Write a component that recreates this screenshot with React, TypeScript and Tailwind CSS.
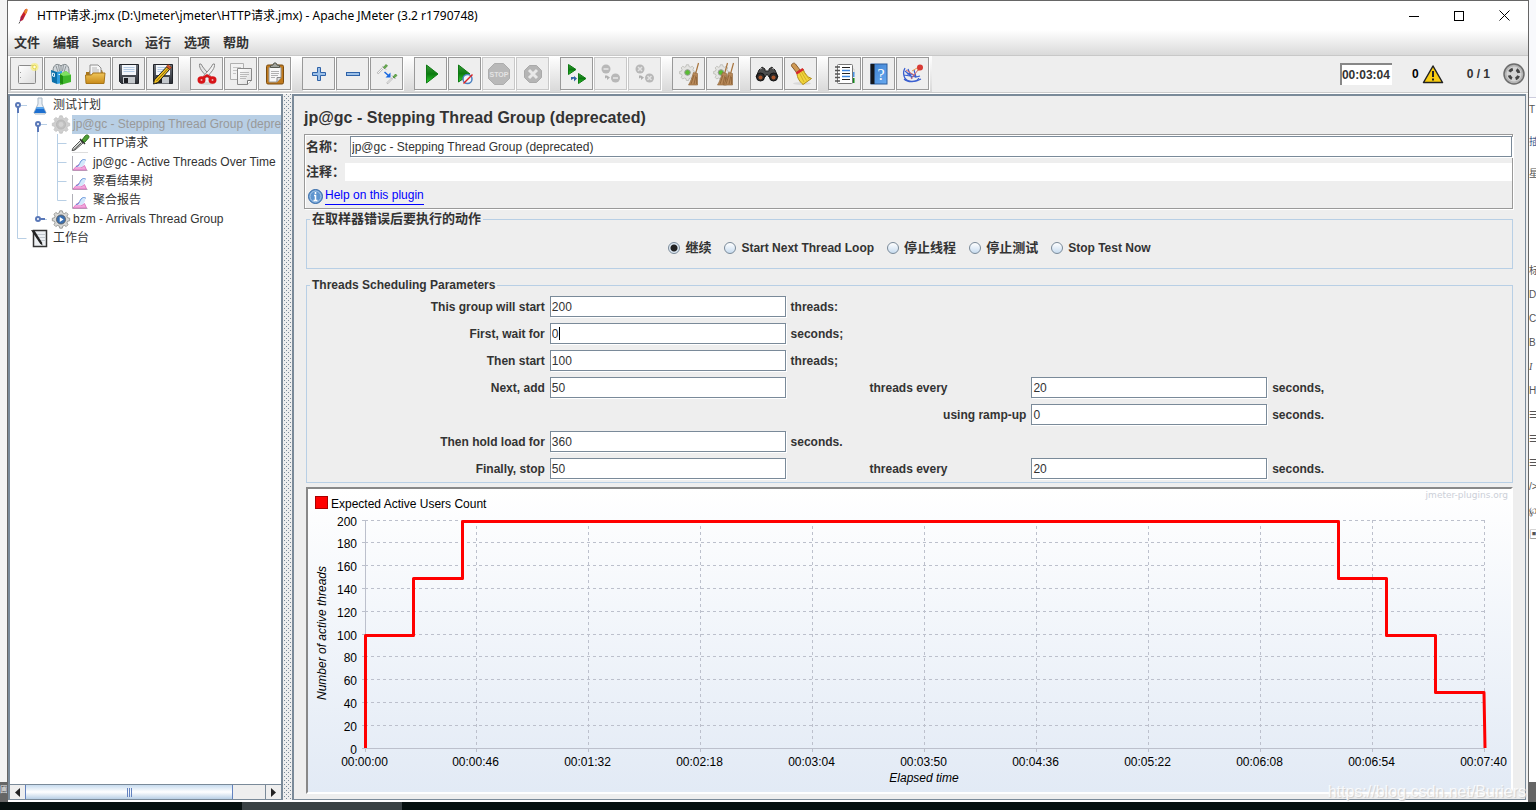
import { useState } from "react";
import type { ReactNode } from "react";

const Icon = ({ children, size = 24 }: { children: ReactNode; size?: number }) => (
    <svg width={size} height={size} viewBox="0 0 24 24" fill="none" aria-hidden="true" className="shrink-0">
        {children}
    </svg>
);

/* Shared gradients used by the icons */
const Gradients = () => (
    <svg width="0" height="0" className="absolute" aria-hidden="true">
        <defs>
            <linearGradient id="green" x1="0" y1="0" x2="0" y2="1">
                <stop offset="0" stopColor="#3a9a3a" />
                <stop offset=".5" stopColor="#0b7a10" />
                <stop offset="1" stopColor="#2fd02f" />
            </linearGradient>
            <linearGradient id="gold" x1="0" y1="0" x2="0" y2="1">
                <stop offset="0" stopColor="#f0c65a" />
                <stop offset="1" stopColor="#c88a18" />
            </linearGradient>
            <linearGradient id="paper" x1="0" y1="0" x2="1" y2="1">
                <stop offset="0" stopColor="#ffffff" />
                <stop offset="1" stopColor="#dcdcdc" />
            </linearGradient>
            <linearGradient id="blue" x1="0" y1="0" x2="1" y2="1">
                <stop offset="0" stopColor="#3b7fd0" />
                <stop offset="1" stopColor="#68aaf0" />
            </linearGradient>
            <linearGradient id="steel" x1="0" y1="0" x2="0" y2="1">
                <stop offset="0" stopColor="#6a7078" />
                <stop offset="1" stopColor="#2a2d33" />
            </linearGradient>
            <linearGradient id="area" x1="0" y1="0" x2="0" y2="1">
                <stop offset="0" stopColor="#ffffff" />
                <stop offset="1" stopColor="#e2eaf5" />
            </linearGradient>
        </defs>
    </svg>
);

const NewIcon = () => (
    <Icon>
        <rect x="3.5" y="3.5" width="17" height="18" rx="1" fill="url(#paper)" stroke="#8a8a8a" />
        <path d="M5.5 10v1M5.5 15v1" stroke="#999" />
        <circle cx="19.5" cy="5" r="4" fill="#f7ee7a" opacity=".7" />
        <circle cx="19.5" cy="5" r="1.8" fill="#fffde0" stroke="#e6d84a" />
    </Icon>
);

const TemplatesIcon = () => (
    <Icon>
        <path d="M4 9c0-7 5-8 8-5 3-3 8-2 8 5v4H4z" fill="#d3d8dc" stroke="#7d8589" />
        <path d="M7 4l2 6M12 4v6M17 4l-2 6M9.5 3l1 6M14.500 3l-1 6" stroke="#7d8589" strokeWidth=".8" />
        <path d="M2 8l6 2v12l-5-2z" fill="#0c6fa8" />
        <path d="M8 10l5-1v12l-5 1z" fill="#2f9ddd" />
        <path d="M3.500 11l2 .6v3l-2-.6zM9.500 12.500h2" stroke="#dff0fa" />
        <path d="M11 12l6-3 5 4v7l-11 3z" fill="#3fb82c" />
        <path d="M11 12l3 1v9.500l-3-1.500z" fill="#1e8d12" />
        <path d="M17 9l5 4-8 1-3-2z" fill="#7fe062" />
    </Icon>
);

const OpenIcon = () => (
    <Icon>
        <path d="M3 10h3l1-2h12l1 3v8H3z" fill="#a8761c" />
        <path d="M7 13V3h8l3 3v8z" fill="#f7f7f7" stroke="#909090" />
        <path d="M9 6h5M9 8h7M9 10h7" stroke="#b5b5b5" />
        <path d="M2.500 13h6l1.500-2h12l-1 10.500h-18z" fill="url(#gold)" stroke="#a87518" />
    </Icon>
);

const Floppy = () => (
    <>
        <path d="M2.500 2.500h19v19h-17l-2-2z" fill="url(#steel)" stroke="#22252a" />
        <rect x="5" y="3" width="14" height="10" fill="#f3f6fa" />
        <path d="M6.500 5.500h11M6.500 7.500h11M6.500 9.500h11" stroke="#b4cbe4" />
        <rect x="6" y="15" width="12" height="6.500" fill="#c4c8cc" />
        <rect x="7" y="16" width="4" height="5" fill="#1c1e22" />
    </>
);

const SaveIcon = () => (
    <Icon>
        <Floppy />
    </Icon>
);

const SaveAsIcon = () => (
    <Icon>
        <Floppy />
        <path d="M15.500 5l3 2.500L7 20.500 2.500 22l.800-4z" fill="#f0c020" stroke="#1a1a1a" />
        <path d="M16.500 7L5.500 19" stroke="#8a6a08" />
        <path d="M15.500 4.500l1.500-2 3.500 3-1.700 2z" fill="#d4582a" stroke="#7a2a10" strokeWidth=".6" />
    </Icon>
);

const CutIcon = () => (
    <Icon>
        <ellipse cx="12" cy="21.500" rx="8" ry="1.500" fill="#d5d5d5" />
        <path d="M4.500 2C4 6 7 10 13.500 16l2-2C12 10 8 6 6 2z" fill="#e5e5e5" stroke="#8a8a8a" />
        <path d="M19.500 2C20 6 17 10 10.500 16l-2-2C12 10 16 6 18 2z" fill="#f3f3f3" stroke="#8a8a8a" />
        <ellipse cx="6.500" cy="18" rx="2.500" ry="2.200" stroke="#d81418" strokeWidth="3" />
        <ellipse cx="17.500" cy="18" rx="2.500" ry="2.200" stroke="#d81418" strokeWidth="3" />
        <path d="M8 16l4-2.500 4 2.500" stroke="#d81418" strokeWidth="2.500" />
    </Icon>
);

const CopyIcon = () => (
    <Icon>
        <path d="M1.500 1.500h13v16h-13z" fill="#f2f2f2" stroke="#b0b0b0" />
        <path d="M4 5.500h8M4 8.500h4M4 11.500h3" stroke="#c5c5c5" />
        <path d="M8.500 6.500h14v12l-4 4h-10z" fill="url(#paper)" stroke="#8a8a8a" />
        <path d="M11 10.500h9M11 12.500h9M11 14.500h7M11 16.500h6" stroke="#bababa" />
        <path d="M18.500 22.500v-4h4" fill="#fff" stroke="#777" />
    </Icon>
);

const PasteIcon = () => (
    <Icon>
        <rect x="3.500" y="3" width="17" height="19" rx="1.500" fill="#c07a1e" stroke="#7c4d10" />
        <path d="M6 5.500h12v10l-4 4.500H6z" fill="#f7f7f7" stroke="#999" />
        <path d="M8 9.500h8M8 11.500h8M8 13.500h7M8 15.500h4" stroke="#b0b0b0" />
        <path d="M14 20v-4.500h4" fill="#ddd" stroke="#888" />
        <path d="M7.500 5.500v-2l2.500-.500 1-2h2l1 2 2.500.500v2z" fill="#a0a39c" stroke="#55584f" />
    </Icon>
);

const PlusIcon = () => (
    <Icon>
        <path d="M10.500 5.500h3v5h5v3h-5v5h-3v-5h-5v-3h5z" fill="#9cc0e8" stroke="#2e62a8" />
    </Icon>
);

const MinusIcon = () => (
    <Icon>
        <rect x="5.500" y="10.500" width="13" height="3" fill="#9cc0e8" stroke="#2e62a8" />
    </Icon>
);

const ToggleIcon = () => (
    <Icon>
        <path d="M2.500 11.500L8 6" stroke="#b5b5b5" strokeWidth="2" />
        <path d="M3 11L8 6" stroke="#f6f6f6" />
        <path d="M7.500 4l3.500 3.500" stroke="#888" strokeWidth=".8" />
        <path d="M8.500 5.500l2.500-3 1.500 1.500-3 2.500z" fill="#68b04c" stroke="#4b8c38" strokeWidth=".8" />
        <path d="M9.500 10l4.500 4" stroke="#1768e0" strokeWidth="1.500" />
        <path d="M15.500 10.500v5h-5z" fill="#1768e0" />
        <path d="M12 21.500l5.500-5.500" stroke="#b5b5b5" strokeWidth="2" />
        <path d="M12.500 21L17 16.500" stroke="#f6f6f6" />
        <path d="M17 13.500l3.500 3.500" stroke="#888" strokeWidth=".8" />
        <path d="M18 15l2.500-3 1.500 1.500-3 2.500z" fill="#68b04c" stroke="#4b8c38" strokeWidth=".8" />
    </Icon>
);

const StartIcon = () => (
    <Icon>
        <path d="M7.500 3v18L19 12z" fill="url(#green)" stroke="#0f7a14" />
    </Icon>
);

const StartNoPauseIcon = () => (
    <Icon>
        <path d="M5.500 3v17L17 12z" fill="url(#green)" stroke="#0f7a14" />
        <circle cx="14.500" cy="17" r="4.500" fill="#eef3fa" stroke="#4a80c0" strokeWidth="1.500" />
        <path d="M10.500 21.500l9-9" stroke="#d22" strokeWidth="1.500" />
    </Icon>
);

const StopIcon = () => (
    <Icon>
        <path d="M7.500 1.500h9l6 6v9l-6 6h-9l-6-6v-9z" fill="#b9b9b9" stroke="#adadad" />
        <text x="12" y="15" textAnchor="middle" fontSize="7" fontWeight="bold" fontFamily="Liberation Sans" fill="#e4e4e4">
            STOP
        </text>
    </Icon>
);

const ShutdownIcon = () => (
    <Icon>
        <path d="M8.500 3.500h7l5 5v7l-5 5h-7l-5-5v-7z" fill="#b5b5b5" stroke="#aaa" />
        <path d="M8 8l8 8M16 8l-8 8" stroke="#e8e8e8" strokeWidth="3" />
    </Icon>
);

const RemoteStartIcon = () => (
    <Icon>
        <path d="M3.500 2.500v10L11 7.500z" fill="url(#green)" stroke="#0f7a14" />
        <path d="M13.500 11.500v10L21 16.500z" fill="url(#green)" stroke="#0f7a14" />
        <path d="M6 15v3l3-1.500v3l3-3-3-2.500v1z" fill="#3465a4" />
    </Icon>
);

const RemoteStopIcon = ({ cross }: { cross?: boolean }) => (
    <Icon>
        <circle cx="7" cy="7" r="4.500" fill="#b8b8b8" />
        <circle cx="16.500" cy="16" r="4.500" fill="#b8b8b8" />
        {cross ? (
            <path d="M5 5l4 4M9 5L5 9M14.500 14l4 4M18.500 14l-4 4" stroke="#e2e2e2" strokeWidth="1.500" />
        ) : (
            <path d="M4.500 7h5M14 16h5" stroke="#dcdcdc" strokeWidth="2" />
        )}
        <path d="M6 13.500v3l2-1v2.500l3-2.500-3-2z" fill="#b0b0b0" />
    </Icon>
);

const gearPath =
    "M8.500 1h3l.600 2.500 2 .8L16.300 3l2.200 2.200-1.300 2.200.8 2 2.500.600v3l-2.500.600-.8 2 1.300 2.200-2.200 2.200-2.200-1.300-2 .8-.600 2.500h-3l-.600-2.500-2-.8L3.700 20l-2.200-2.200 1.300-2.200-.8-2L-.500 13v-3l2.500-.600.8-2L1.500 5.200 3.700 3l2.200 1.300 2-.8z";

const Broom = ({ x }: { x: number }) => (
    <g transform={`translate(${x} 0)`}>
        <path d="M12.500 1l-3 11" stroke="#a8743c" strokeWidth="1.200" />
        <path d="M7.500 10.500l4 1 0 11.500H2.500C5 19 6 15 7.500 10.500z" fill="#b98a5a" stroke="#8a5f34" strokeWidth=".6" />
        <path d="M8 13L5 22M10 13.500L8 22M10.500 15v7" stroke="#7c5228" strokeWidth=".6" />
    </g>
);

const ClearIcon = () => (
    <Icon>
        <g transform="translate(3 2) scale(.75)">
            <path d={gearPath} fill="#e4e4e2" stroke="#b5b5b0" />
        </g>
        <circle cx="10.500" cy="10.500" r="2.800" fill="#59bd33" stroke="#999" />
        <Broom x={9} />
    </Icon>
);

const ClearAllIcon = () => (
    <Icon>
        <g transform="translate(3 2) scale(.75)">
            <path d={gearPath} fill="#e4e4e2" stroke="#b5b5b0" />
        </g>
        <circle cx="10" cy="10.500" r="2.800" fill="#59bd33" stroke="#999" />
        <Broom x={4} />
        <Broom x={10} />
    </Icon>
);

const SearchIcon = () => (
    <Icon>
        <path d="M4 8l3-3 3 2v2h4V7l3-2 3 3 3 7h-9l-2-3-2 3H1z" fill="#4d4d4d" stroke="#222" />
        <circle cx="5.500" cy="15" r="4" fill="#2b2b2b" stroke="#111" />
        <circle cx="18.500" cy="15" r="4" fill="#2b2b2b" stroke="#111" />
        <circle cx="5.500" cy="15.500" r="2" fill="#a9542a" />
        <circle cx="18.500" cy="15.500" r="2" fill="#a9542a" />
        <path d="M5 7l2-1M17 6l2 1" stroke="#b5b5b5" />
    </Icon>
);

const SweepIcon = () => (
    <Icon>
        <ellipse cx="13" cy="21.500" rx="9" ry="1.500" fill="#d9d9d9" />
        <path d="M2.500 4c-.5-2 2.500-4 4-2l4.500 6-3.500 2.500z" fill="#cf9a54" stroke="#86592a" />
        <path d="M8 11l6-4c2 5 4 8 8.500 9.500L14 22.500C11 20 8 16 8 11z" fill="#f1d53c" stroke="#b08c18" />
        <path d="M10.500 11l4.500 9M12.500 10l5 8.500M14 9l6 8" stroke="#c9a620" strokeWidth=".8" />
        <path d="M6.500 10.500l7-4.500 1.500 2-7 4.500z" fill="#d8282c" />
    </Icon>
);

const FunctionIcon = () => (
    <Icon>
        <path d="M18 7h3v5h-3z" fill="#fff" stroke="#bbb" strokeWidth=".6" />
        <path d="M18 10h3.500v5H18z" fill="#4b96e6" />
        <path d="M18 16h3.500v5H18z" fill="#158a1c" />
        <rect x="4.500" y="2.500" width="15" height="19" rx="1" fill="#fff" stroke="#777" />
        <path d="M9 5.500h8M9 11.500h8M9 17.500h8" stroke="#222" />
        <path d="M9 8.500h8M9 14.500h8" stroke="#3b86e0" strokeWidth="1.500" />
        <path d="M2 5h5M2 8.500h5M2 12h5M2 15.500h5M2 19h5" stroke="#555" strokeWidth="1.500" />
    </Icon>
);

const HelpIcon = () => (
    <Icon>
        <rect x="4" y="2" width="16" height="20" fill="url(#blue)" stroke="#2c5c9c" />
        <rect x="3.500" y="2" width="4" height="20" fill="#14171c" />
        <text x="14" y="18" textAnchor="middle" fontSize="16" fontFamily="Liberation Serif" fill="#fff">
            ?
        </text>
    </Icon>
);

const DashboardIcon = () => (
    <Icon>
        <path d="M4 6c-3 5-1 12 4 13 4 1 8 0 10-3M4 9l7 6M3 13l12 2M7 7l4 10" stroke="#3a5fd0" strokeWidth="1.200" />
        <path d="M3 17c4 4 12 3 17 0M13 8l2 7 4-1M6 12c3-1 6 0 9 3" stroke="#3a5fd0" strokeWidth="1.200" />
        <path d="M5 8l8 5M10 17l7-9" stroke="#d46a6a" />
        <path d="M11 9l5-3 2 3" stroke="#e7a05a" />
        <circle cx="19" cy="5.500" r="3" fill="#d83a34" />
    </Icon>
);

const toolbar = [
    [
        { name: "New", icon: <NewIcon /> },
        { name: "Templates", icon: <TemplatesIcon /> },
        { name: "Open", icon: <OpenIcon /> },
        { name: "Save", icon: <SaveIcon /> },
        { name: "Save as", icon: <SaveAsIcon /> },
    ],
    [
        { name: "Cut", icon: <CutIcon /> },
        { name: "Copy", icon: <CopyIcon /> },
        { name: "Paste", icon: <PasteIcon /> },
    ],
    [
        { name: "Expand all", icon: <PlusIcon /> },
        { name: "Collapse all", icon: <MinusIcon /> },
        { name: "Toggle", icon: <ToggleIcon /> },
    ],
    [
        { name: "Start", icon: <StartIcon /> },
        { name: "Start no pauses", icon: <StartNoPauseIcon /> },
        { name: "Stop", icon: <StopIcon />, disabled: true },
        { name: "Shutdown", icon: <ShutdownIcon />, disabled: true },
    ],
    [
        { name: "Remote start all", icon: <RemoteStartIcon /> },
        { name: "Remote stop all", icon: <RemoteStopIcon />, disabled: true },
        { name: "Remote shutdown all", icon: <RemoteStopIcon cross />, disabled: true },
    ],
    [
        { name: "Clear", icon: <ClearIcon /> },
        { name: "Clear all", icon: <ClearAllIcon /> },
    ],
    [
        { name: "Find", icon: <SearchIcon /> },
        { name: "Reset search", icon: <SweepIcon /> },
    ],
    [
        { name: "Function helper", icon: <FunctionIcon /> },
        { name: "Help", icon: <HelpIcon /> },
        { name: "Dashboard", icon: <DashboardIcon /> },
    ],
];

const TitleBar = () => (
    <header className="flex h-[29px] items-center bg-white pl-2">
        <svg width="16" height="16" viewBox="0 0 16 16" aria-hidden="true" className="mr-[5px]">
            <path d="M9 1.500C11 0 12 1 11 4L7 12 4 13.500 4.500 9z" fill="#c8202c" />
            <path d="M9.500 1.500C11 0 12 1 11 4l-1.500 2.500L8 4z" fill="#e8882a" />
            <path d="M7 8l-3 5" stroke="#7a1f6a" />
            <path d="M3 15.500l1-2" stroke="#555" />
        </svg>
        <h1 className="flex-1 font-['Noto_Sans','Noto_Sans_CJK_SC',sans-serif] text-xs whitespace-nowrap text-black">
            HTTP请求.jmx (D:\Jmeter\jmeter\HTTP请求.jmx) - Apache JMeter (3.2 r1790748)
        </h1>
        <div className="flex">
            <button aria-label="Minimize" className="flex h-7 w-[45px] items-center justify-center">
                <svg width="10" height="10"><path d="M0 5.500h10" stroke="#000" /></svg>
            </button>
            <button aria-label="Maximize" className="flex h-7 w-[45px] items-center justify-center">
                <svg width="10" height="10"><rect x=".5" y=".5" width="9" height="9" fill="none" stroke="#000" /></svg>
            </button>
            <button aria-label="Close" className="flex h-7 w-[47px] items-center justify-center">
                <svg width="11" height="11"><path d="M.5.500l10 10M10.500.500l-10 10" stroke="#000" /></svg>
            </button>
        </div>
    </header>
);

const menus = ["文件", "编辑", "Search", "运行", "选项", "帮助"];

const MenuBar = () => (
    <nav className="flex h-[26px] items-center gap-[13px] border-b border-[#c8c8c8] bg-gradient-to-b from-white to-[#dadada] pl-[6px] font-bold">
        {menus.map((m) => (
            <button key={m} className={m === "Search" ? "text-xs leading-4" : "text-[13px] leading-4"}>{m}</button>
        ))}
    </nav>
);

const Toolbar = () => (
    <div className="flex h-[38px] items-start justify-between border-b border-white bg-[#eee]">
        <div className="flex h-[37px] gap-[11px] border-b border-[#ccc] bg-gradient-to-b from-white to-[#d8d8d8] pt-px pr-[3px] pl-[2px]">
            {toolbar.map((group, i) => (
                <div key={i} className="flex gap-px">
                    {group.map((b) => (
                        <button
                            key={b.name}
                            aria-label={b.name}
                            disabled={b.disabled}
                            className="flex size-[33px] items-center justify-center border border-[#999] bg-[#eee] shadow-[1px_1px_0_#fff] disabled:border-[#c8c8c8]"
                        >
                            {b.icon}
                        </button>
                    ))}
                </div>
            ))}
        </div>
        <div className="flex h-[37px] flex-1 items-center justify-end border-b border-[#ccc] pr-[3px] font-bold">
            <span className="h-[22px] border-t-2 border-l-2 border-[#888] bg-white pr-[2px] leading-5 text-[#333]">00:03:04</span>
            <span className="ml-5 text-black">0</span>
            <svg width="22" height="20" viewBox="0 0 22 20" aria-hidden="true" className="ml-[3px]">
                <path d="M11 2L20.500 18.500h-19z" fill="#f8cc10" stroke="#222" strokeWidth="1.500" strokeLinejoin="round" />
                <path d="M11 7v6M11 14.500v2" stroke="#222" strokeWidth="2" />
            </svg>
            <span className="ml-[23px]">0 / 1</span>
            <svg width="22" height="22" viewBox="0 0 22 22" aria-hidden="true" className="ml-[13px]">
                <circle cx="11" cy="11" r="10" fill="#b5b5b5" stroke="#6c6c6c" strokeWidth="1.500" />
                <circle cx="11" cy="11" r="7.500" fill="#d4d4d4" />
                <circle cx="11" cy="11" r="5" fill="none" stroke="#444" strokeWidth="3" strokeDasharray="4 3.850" strokeDashoffset="-2" />
            </svg>
        </div>
    </div>
);

const FlaskIcon = () => (
    <svg width="16" height="18" viewBox="0 0 16 18" aria-hidden="true">
        <path d="M7 1h4v6l4 8.500-1 1.500H4l-1-1.500L7 7z" fill="#e8eef4" stroke="#a9b8c6" />
        <path d="M6 10h6l3 6H3z" fill="#1c6fd0" />
        <path d="M6 10h6l1 2H5z" fill="#5aa6ee" />
    </svg>
);

const GearIcon = ({ off }: { off?: boolean }) => (
    <svg width="20" height="19" viewBox="-1 0 22 23" aria-hidden="true">
        <path d={gearPath} fill={off ? "#cfcfcf" : "#d8d8d6"} stroke={off ? "#c2c2c2" : "#8c8c88"} />
        <circle cx="10" cy="11.500" r="5.500" fill={off ? "#c0c0c0" : "#3a6fb0"} stroke={off ? "#b5b5b5" : "#5a5a5a"} />
        {!off && <path d="M8.500 8.500v6l4.500-3z" fill="#fff" />}
        {off && <circle cx="10" cy="11.500" r="3" fill="#d2d2d2" />}
    </svg>
);

const DropperIcon = () => (
    <svg width="20" height="19" viewBox="0 0 20 19" aria-hidden="true">
        <path d="M1 18.500h16" stroke="#ddd" />
        <path d="M1 16.500l1-2.500 7.500-7.500 2.500 2.500-8 7z" fill="#dfe3df" stroke="#555" />
        <path d="M2.500 16l8-7.500" stroke="#444" />
        <path d="M9 5l5 5" stroke="#333" strokeWidth="1.500" />
        <path d="M11 6l3.500-4.500c2-1.500 4.500.5 3 2.500L13.500 8.500z" fill="#4fa036" stroke="#2c6a1e" />
    </svg>
);

const GraphIcon = () => (
    <svg width="17" height="18" viewBox="0 0 17 18" aria-hidden="true">
        <path d="M1.500 2v14.500h15" stroke="#b0b0b8" fill="none" />
        <path d="M2 16l3-3.500 3-2 2.500 3 3-2 2 4.500z" fill="#f2a6dc" stroke="#d668b8" strokeWidth=".8" />
        <path d="M6.500 13c2.500-1 2-6.500 6-7 2.500 0 2 2 1 4-1 1.500-2 3-4 3z" fill="#d4e8fb" />
        <path d="M5 12.500c4.500 0 3-6 7.500-7 1.500 0 2 .5 2.500 1" stroke="#5a8ed8" fill="none" />
    </svg>
);

const WorkbenchIcon = () => (
    <svg width="18" height="19" viewBox="0 0 18 19" aria-hidden="true">
        <rect x="2.500" y="1.500" width="13" height="16" fill="#eceff2" stroke="#333" strokeWidth="1.500" />
        <path d="M6 5.500h8M6 8.500h8M7 11.500h7" stroke="#c2c8ce" />
        <path d="M0 1l3.500.500 7.500 12 .500 3-2.500-2z" fill="#222" />
    </svg>
);

const nodes = [
    { label: "测试计划", indent: "pl-[21px]", icon: <FlaskIcon /> },
    { label: "jp@gc - Stepping Thread Group (deprecated)", indent: "pl-[41px]", icon: <GearIcon off />, selected: true },
    { label: "HTTP请求", indent: "pl-[61px]", icon: <DropperIcon /> },
    { label: "jp@gc - Active Threads Over Time", indent: "pl-[61px]", icon: <GraphIcon /> },
    { label: "察看结果树", indent: "pl-[61px]", icon: <GraphIcon /> },
    { label: "聚合报告", indent: "pl-[61px]", icon: <GraphIcon /> },
    { label: "bzm - Arrivals Thread Group", indent: "pl-[41px]", icon: <GearIcon /> },
    { label: "工作台", indent: "pl-[21px]", icon: <WorkbenchIcon /> },
];

const Tree = () => (
    <div className="relative flex-1 overflow-hidden bg-white">
        {/* connector lines and expand handles */}
        <svg width="60" height="152" viewBox="0 0 60 152" fill="none" aria-hidden="true" className="absolute top-0 left-0">
            <path d="M7.500 12v130.500h9M27.500 30v93M47.500 38v66.500h9M47.500 47.500h9M47.500 66.500h9M47.500 85.500h9" stroke="#b8cfe5" />
            <path d="M11 9.500h6M31 28.500h6M31 123.500h6" stroke="#b8cfe5" />
            <path d="M8 11v6M28 30v6M29 123h6" stroke="#5a78b8" strokeWidth="2" />
            <circle cx="8" cy="9" r="2" fill="#fff" stroke="#5a78b8" strokeWidth="2" />
            <circle cx="28" cy="28" r="2" fill="#fff" stroke="#5a78b8" strokeWidth="2" />
            <circle cx="28" cy="123" r="2" fill="#fff" stroke="#5a78b8" strokeWidth="2" />
        </svg>
        <ul>
            {nodes.map((n) => (
                <li key={n.label} className={`flex h-[19px] items-center ${n.indent}`}>
                    <span className="flex w-[21px] shrink-0 items-center">{n.icon}</span>
                    <span
                        className={`pl-px leading-[19px] whitespace-nowrap ${n.selected ? "w-full bg-[#b8cfe5] text-[#999]" : ""}`}
                    >
                        {n.label}
                    </span>
                </li>
            ))}
        </ul>
    </div>
);

const ScrollBar = () => (
    <div className="flex h-[15px] border-t border-[#7a8a99] bg-[#eee]">
        <button aria-label="Scroll left" className="flex w-4 items-center justify-center border-r border-[#6382bf]">
            <svg width="5" height="9"><path d="M5 0v9L0 4.500z" fill="#222" /></svg>
        </button>
        <div className="flex flex-1 pr-8">
            <div className="flex flex-1 items-center justify-center gap-px border-r border-[#6382bf] bg-gradient-to-b from-[#c8dcef] via-white to-[#b8cfe5]">
                <i className="h-[9px] w-px bg-[#6382bf]" />
                <i className="h-[9px] w-px bg-[#6382bf]" />
                <i className="h-[9px] w-px bg-[#6382bf]" />
            </div>
        </div>
        <button aria-label="Scroll right" className="flex w-4 items-center justify-center border-l border-[#7a8a99]">
            <svg width="5" height="9"><path d="M0 0v9l5-4.500z" fill="#222" /></svg>
        </button>
    </div>
);

const inputClass =
    "h-[21px] w-full min-w-0 border border-[#7a8a99] bg-white px-px text-xs text-[#333] shadow-[1px_1px_0_#fff] outline-none";

const actions = ["继续", "Start Next Thread Loop", "停止线程", "停止测试", "Stop Test Now"];

const ErrorAction = () => {
    const [action, setAction] = useState("继续");

    return (
        <fieldset className="mt-[2px] ml-[2px] h-[58px] border border-[#b8cfe5]">
            <legend className="ml-[3px] px-[2px] text-[13px] leading-4 font-bold">在取样器错误后要执行的动作</legend>
            <div className="flex h-[41px] items-center justify-center gap-[13px] font-bold">
                {actions.map((a) => (
                    <label key={a} className="flex h-4 items-center gap-[5px]">
                        <input
                            type="radio"
                            name="action"
                            checked={action === a}
                            onChange={() => setAction(a)}
                            className="size-3 appearance-none rounded-full border border-[#7a8a99] bg-gradient-to-b from-white to-[#c8dcef] checked:bg-[radial-gradient(circle,#222_0_3px,#dde8f3_4px)]"
                        />
                        <span className={/[a-z]/.test(a) ? "text-xs leading-4" : "text-[13px] leading-4"}>{a}</span>
                    </label>
                ))}
            </div>
        </fieldset>
    );
};

const rows = [
    { id: "start", label: "This group will start", value: "200", unit: "threads:" },
    { id: "wait", label: "First, wait for", value: "0", unit: "seconds;", caret: true },
    { id: "then", label: "Then start", value: "100", unit: "threads;" },
    { id: "add", label: "Next, add", value: "50", mid: "threads every", value2: "20", unit2: "seconds," },
    { id: "ramp", mid: "using ramp-up", midRight: true, value2: "0", unit2: "seconds." },
    { id: "hold", label: "Then hold load for", value: "360", unit: "seconds." },
    { id: "stop", label: "Finally, stop", value: "50", mid: "threads every", value2: "20", unit2: "seconds." },
];

const Scheduling = () => (
    <fieldset className="mt-2 ml-[2px] border border-[#b8cfe5] pr-1 pb-[3px] pl-[2px]">
        <legend className="ml-px px-[2px] leading-4 font-bold">Threads Scheduling Parameters</legend>
        <div className="flex flex-col gap-[6px] pt-[3px] font-bold">
            {rows.map((r) => (
                <div key={r.id} className="grid h-[21px] grid-cols-5 items-center gap-x-[5px]">
                    {r.label ? <label htmlFor={r.id} className="text-right">{r.label}</label> : <span />}
                    <div className="relative flex">
                        {r.value && <input id={r.id} defaultValue={r.value} className={`${inputClass} font-normal`} />}
                        {r.caret && <i className="absolute top-1 left-[9px] h-[13px] w-px bg-black" />}
                    </div>
                    {r.mid ? (
                        <label htmlFor={`${r.id}-2`} className={r.midRight ? "text-right" : "text-center"}>{r.mid}</label>
                    ) : (
                        <span>{r.unit}</span>
                    )}
                    {r.value2 && <input id={`${r.id}-2`} defaultValue={r.value2} className={`${inputClass} font-normal`} />}
                    {r.unit2 && <span>{r.unit2}</span>}
                </div>
            ))}
        </div>
    </fieldset>
);

const times = [
    "00:00:00", "00:00:46", "00:01:32", "00:02:18", "00:03:04", "00:03:50",
    "00:04:36", "00:05:22", "00:06:08", "00:06:54", "00:07:40",
];
const counts = [200, 180, 160, 140, 120, 100, 80, 60, 40, 20, 0];
const xAt = (i: number) => 57.5 + Math.floor(i * 111.9);
const yAt = (n: number) => 259.5 - Math.ceil(n * 1.14);

const Chart = () => (
    <div className="mt-1 ml-[2px] min-h-0 flex-1 border-2 border-t-[#888] border-r-white border-b-white border-l-[#888]">
        <svg viewBox="0 0 1203 303" preserveAspectRatio="none" className="block h-full w-full" fontSize="12">
            <rect width="1203" height="303" fill="url(#area)" />
            <rect x="7.500" y="7.500" width="12" height="12" fill="#f00" stroke="#a00" />
            <text x="23" y="19">Expected Active Users Count</text>
            <text x="1200" y="9" fontSize="9" textAnchor="end" fill="#cccfd8" fontFamily="DejaVu Sans">
                jmeter-plugins.org
            </text>
            {counts.map((n) => (
                <g key={n}>
                    <path d={`M54 ${yAt(n)}h3`} stroke="#bcc0cc" />
                    {n > 0 && <path d={`M57 ${yAt(n)}h1120`} stroke="#bcc0cc" strokeDasharray="3 3" />}
                    <text x="49" y={yAt(n) + 5} textAnchor="end">{n}</text>
                </g>
            ))}
            {times.map((t, i) => (
                <g key={t}>
                    {i > 0 && <path d={`M${xAt(i)} 31v229`} stroke="#bcc0cc" strokeDasharray="3 3" />}
                    <path d={`M${xAt(i)} 260v3`} stroke="#bcc0cc" />
                    <text x={xAt(i) - 1} y="277" textAnchor="middle">{t}</text>
                </g>
            ))}
            <path d="M57.500 31v228.500H1177" stroke="#bcc0cc" fill="none" />
            <path
                d="M57.500 259V146.500H105.500V89.500H154.500V32.500H1030.500V89.500H1078.500V146.500H1127.500V203.500H1176L1177 259"
                stroke="#f00"
                strokeWidth="3"
                strokeLinejoin="round"
                fill="none"
            />
            <text x="616" y="293" textAnchor="middle" fontStyle="italic">Elapsed time</text>
            <text transform="translate(18 144) rotate(-90)" textAnchor="middle" fontStyle="italic">
                Number of active threads
            </text>
        </svg>
    </div>
);

const ThreadGroup = () => (
    <main className="flex min-w-0 flex-1 flex-col border-t-2 border-r border-b border-l-2 border-[#7a8a99] pr-3 pb-[5px] pl-[10px]">
        <h2 className="pt-[10px] pb-1 text-base leading-6 font-bold">jp@gc - Stepping Thread Group (deprecated)</h2>
        <section className="border border-[#999] pt-px pb-[3px] pl-px shadow-[inset_1px_1px_0_#fff,1px_1px_0_#fff]">
            <div className="flex items-center">
                <label htmlFor="name" className="w-11 shrink-0 text-[13px] leading-4 font-bold">名称：</label>
                <input id="name" defaultValue="jp@gc - Stepping Thread Group (deprecated)" className={inputClass} />
            </div>
            <div className="mt-[6px] flex items-center">
                <label htmlFor="comment" className="w-[39px] shrink-0 text-[13px] leading-4 font-bold">注释：</label>
                <input id="comment" className="h-[18px] w-full min-w-0 bg-white text-xs outline-none" />
            </div>
            <div className="mt-[6px] flex h-[18px] items-center gap-[2px] pl-[2px]">
                <svg width="15" height="15" viewBox="0 0 15 15" aria-hidden="true">
                    <circle cx="7.500" cy="7.500" r="7" fill="#5f95cf" stroke="#356aa8" />
                    <circle cx="7.500" cy="7.500" r="5.500" fill="none" stroke="#a9c8e8" />
                    <path d="M7.500 3v2M6 6.500h1.500V11M5.500 11.500h4" stroke="#fff" strokeWidth="1.500" fill="none" />
                </svg>
                <a href="#help" className="border-b border-[#00f] leading-[17px] text-[#00f]">Help on this plugin</a>
            </div>
        </section>
        <ErrorAction />
        <Scheduling />
        <Chart />
    </main>
);

/* Slice of the editor toolbar that shows beside the window */
const editorMarks = ["标", "D", "C", "B", "I", "H", "☰", "☰", "☰", "/>", "℘", "▣"];

export default function App() {
    return (
        <div className="flex h-screen flex-col overflow-hidden bg-white font-['Liberation_Sans','Noto_Sans_CJK_SC',sans-serif] text-xs text-[#333]">
            <Gradients />
            <div className="flex min-h-0 flex-1">
                <div className="flex w-[7px] flex-col justify-end overflow-hidden bg-[#f4f4f4]">
                    <div className="h-5 bg-[#666] text-[8px] leading-4 text-[#eee]">圃</div>
                </div>
                <div className="relative flex min-w-0 flex-1 flex-col border-x border-t border-[#666] bg-[#eee]">
                    <TitleBar />
                    <MenuBar />
                    <Toolbar />
                    <div className="flex min-h-0 flex-1 border-b-2 border-white pr-[2px]">
                        <aside className="flex w-[275px] shrink-0 flex-col border-2 border-b border-[#7a8a99]">
                            <Tree />
                            <ScrollBar />
                        </aside>
                        <div className="w-[9px] shrink-0 bg-[conic-gradient(at_1px_1px,transparent_75%,#7a8a99_0),conic-gradient(at_1px_1px,transparent_75%,#7a8a99_0)] bg-[length:4px_4px] bg-[position:3px_0,1px_2px]" />
                        <ThreadGroup />
                    </div>
                    <span className="absolute right-[2px] bottom-0 text-base leading-5 text-white/80 [text-shadow:1px_1px_1px_#ccc]">
                        https://blog.csdn.net/Buriers
                    </span>
                </div>
                <div className="flex w-[7px] flex-col overflow-hidden bg-white text-[10px] text-[#555]">
                    <div className="h-[98px] border-b border-[#ccd] bg-[#f8f9fc]" />
                    <div className="h-8 leading-6">T</div>
                    <div className="h-8 leading-6 text-[#3d5a8c]">插</div>
                    <div className="h-[97px] leading-6">星</div>
                    <div className="flex-1">
                        {editorMarks.map((m, i) => (
                            <div
                                key={i}
                                className={`h-6 leading-6 whitespace-nowrap ${m === "I" ? "font-['Liberation_Serif',serif] italic" : ""}`}
                            >
                                {m}
                            </div>
                        ))}
                    </div>
                    <div className="h-5 bg-[#666]" />
                </div>
            </div>
            <footer className="flex h-2 shrink-0 bg-[#06100f]">
                <div className="ml-[242px] w-40 bg-[#3a4244]" />
            </footer>
        </div>
    );
}
